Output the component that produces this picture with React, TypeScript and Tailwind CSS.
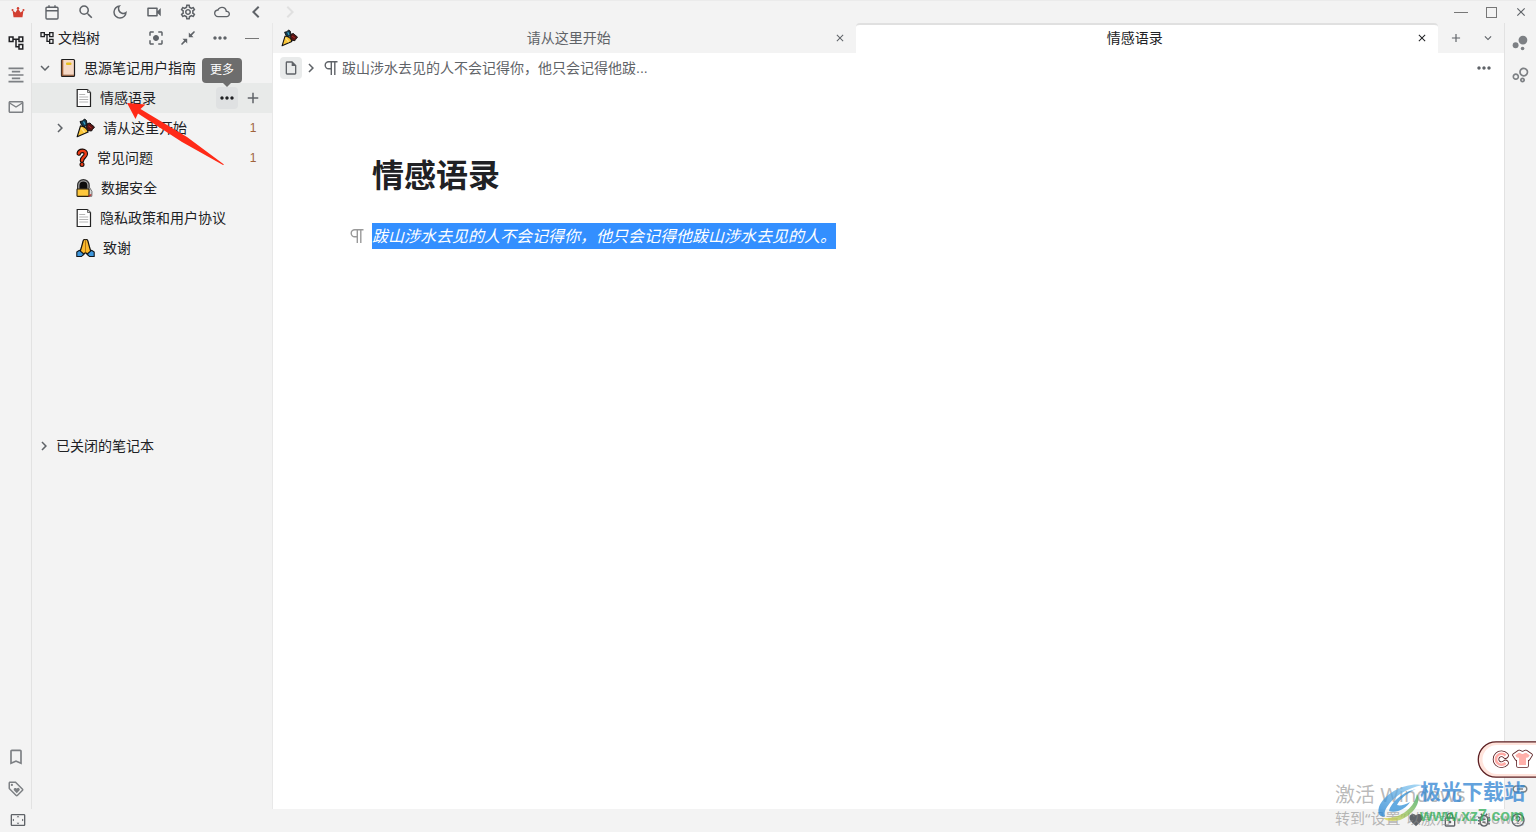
import React, { type ReactElement, type ReactNode } from "react";
import {
  MdAdd,
  MdBubbleChart,
  MdCenterFocusStrong,
  MdChevronLeft,
  MdChevronRight,
  MdClose,
  MdCloudQueue,
  MdExpandMore,
  MdFavorite,
  MdFormatAlignCenter,
  MdHelpOutline,
  MdLink,
  MdMailOutline,
  MdMoreHoriz,
  MdOutlineAccountTree,
  MdOutlineBookmarkBorder,
  MdOutlineBubbleChart,
  MdOutlineBugReport,
  MdOutlineDarkMode,
  MdOutlineInsertDriveFile,
  MdOutlineLock,
  MdOutlineLoyalty,
  MdOutlineSettings,
  MdOutlineSettingsOverscan,
  MdOutlineVideocam,
  MdSearch,
} from "react-icons/md";

type IconButtonProps = {
  label: string;
  className?: string;
  children: ReactNode;
};

const IconButton = ({ label, className = "", children }: IconButtonProps): ReactElement => (
  <button
    type="button"
    aria-label={label}
    className={`flex shrink-0 items-center justify-center ${className}`}
  >
    {children}
  </button>
);

const CrownIcon = () => (
  <svg viewBox="0 0 16 14" className="h-3 w-3.5" fill="#d23f31">
    <circle cx="1.6" cy="4.6" r="1.2" />
    <circle cx="8" cy="2.6" r="1.4" />
    <circle cx="14.4" cy="4.6" r="1.2" />
    <path d="M1.6 5 5 7.6 8 3l3 4.6 3.4-2.600L13.200 13H2.800Z" />
  </svg>
);

const CalendarIcon = () => (
  <svg viewBox="0 0 14 15" className="h-[15px] w-3.5" fill="none" stroke="currentColor" strokeWidth="1.4">
    <rect x="1" y="2.2" width="12" height="11.8" rx="1" />
    <path d="M1 5.800h12M4 .2v2M10 .2v2" />
  </svg>
);

const CollapseIcon = () => (
  <svg viewBox="0 0 16 16" className="size-4" fill="currentColor">
    <path d="M8.800 2.500v4.700h4.700l-1.700-1.700 3.200-3.500-1-1-3.500 3.200ZM7.200 13.500V8.800H2.500l1.700 1.700L1 14l1 1 3.500-3.200Z" />
  </svg>
);

const ParagraphIcon = ({ className = "" }: { className?: string }) => (
  <svg viewBox="0 0 14 16" className={`h-4 w-3.5 ${className}`} fill="none" stroke="currentColor" strokeWidth="1.4">
    <path d="M13.500 1.800H4.700a3.500 3.500 0 0 0 0 7h2.600M7.300 1.800v13.200M10.800 1.800v13.200" />
  </svg>
);

const NotebookIcon = () => (
  <svg viewBox="0 0 16 20" className="h-5 w-4 shrink-0">
    <rect x="1.5" y="1.5" width="13" height="17" rx="1" fill="#f6d9c6" stroke="#1c1c1c" strokeWidth="1.2" />
    <path d="M2.500 2v16" stroke="#a5643c" strokeWidth="1.6" />
    <path d="M2 17.300h12" stroke="#8d5a3b" strokeWidth="1.2" />
    <rect x="6" y="4.5" width="5.500" height="2.500" rx="1" fill="#e8bd1c" />
  </svg>
);

const PageIcon = () => (
  <svg viewBox="0 0 16 20" className="h-5 w-4 shrink-0">
    <path d="M1.200 1.500h10.300l3 3v14H1.200Z" fill="#fff" stroke="#222" strokeWidth="1.2" />
    <path d="M11.500 1.500V4.500h3" fill="#ccc" stroke="#555" strokeWidth=".8" />
    <path d="M3.200 6.500h6M3.200 9h9M3.200 11.500h9M3.200 14h9" stroke="#b5b5b5" />
  </svg>
);

const PartyIcon = ({ className = "h-5 w-[19px]" }: { className?: string }) => (
  <svg viewBox="0 0 19 20" className={`shrink-0 ${className}`}>
    <path d="M4 3.500 6.500 3 8.500 1l2 1.500L11 7 8 9 5.500 7Z" fill="#123a50" stroke="#101010" />
    <path d="m7.500 3.500 1.500 3" fill="none" stroke="#3aa5c9" strokeWidth="1.300" />
    <path d="m10.500 9 1-3.500L14 5l1.500 1.500L18.500 9 16.500 11.500l-1 1.500-4-.5Z" fill="#5a1413" stroke="#101010" />
    <path d="m12.500 8 3 2" fill="none" stroke="#b53028" />
    <path d="M4.500 7.800c3.500.2 7 2.700 7.600 6.200L1.200 18.700Z" fill="#fbc638" stroke="#101010" strokeWidth="1.2" strokeLinejoin="round" />
    <path d="m5.200 10 3.500 4.500" stroke="#fde189" strokeWidth="1.300" />
  </svg>
);

const QuestionIcon = () => (
  <svg viewBox="0 0 13 20" className="h-5 w-[13px] shrink-0" fill="none" strokeLinecap="round">
    <path d="M2.800 5.500C3.500 1.800 10 2 9.800 6c-.2 3-3.800 3-3.800 6.500" stroke="#170b08" strokeWidth="4.6" />
    <circle cx="6" cy="16.500" r="2.500" fill="#170b08" />
    <path d="M2.800 5.500C3.500 1.800 10 2 9.800 6c-.2 3-3.800 3-3.800 6.500" stroke="#ee3c16" strokeWidth="2.4" />
    <circle cx="6" cy="16.500" r="1.400" fill="#ee3c16" />
  </svg>
);

const LockIcon = () => (
  <svg viewBox="0 0 17 20" className="h-5 w-[17px] shrink-0">
    <path d="M1.800 11V7.300a5.600 5.600 0 0 1 11.200 0V11Z" fill="#0c0c0c" stroke="#333" strokeWidth="1.600" />
    <path d="M2.800 11V7.500a4.600 4.600 0 0 1 9.200 0V11" fill="none" stroke="#a9a9a9" strokeWidth="1.200" />
    <path d="m13 8.500 3 5-.2 4.800h-3.500Z" fill="#d7d7d7" stroke="#555" strokeWidth=".8" />
    <rect x="1" y="11" width="12" height="7.400" rx=".6" fill="#ffc83d" stroke="#2a2110" strokeWidth="1.100" />
    <path d="m12.500 18.400 2.800-1.800" stroke="#b32626" strokeWidth="1.200" />
  </svg>
);

const PrayIcon = () => (
  <svg viewBox="0 0 19 20" className="h-5 w-[19px] shrink-0" strokeLinejoin="round">
    <path d="M9.500 1.800c-1.400-.8-2.200 0-2.500 1.700L5.500 9 4 14l2.500 3.500 3-3 3 3L15 14l-1.500-5L12 3.500c-.3-1.700-1.100-2.500-2.500-1.700Z" fill="#fcb92c" stroke="#16120c" strokeWidth="1.200" />
    <path d="M9.500 2.500v12" stroke="#b8780f" />
    <path d="M3.500 12.300 7.800 16l-2.300 2.500H.8V14ZM15.500 12.300 11.200 16l2.300 2.500h4.700V14Z" fill="#3e97dd" stroke="#10161c" strokeWidth="1.100" />
  </svg>
);

type Doc = {
  title: string;
  icon: ReactElement;
  count?: number;
  folded?: boolean;
  current?: boolean;
};

const docs: Doc[] = [
  { title: "情感语录", icon: <PageIcon />, current: true },
  { title: "请从这里开始", icon: <PartyIcon />, count: 1, folded: true },
  { title: "常见问题", icon: <QuestionIcon />, count: 1 },
  { title: "数据安全", icon: <LockIcon /> },
  { title: "隐私政策和用户协议", icon: <PageIcon /> },
  { title: "致谢", icon: <PrayIcon /> },
];

const Toolbar = () => (
  <header className="flex h-[23px] shrink-0 items-center justify-between border-t border-[#ebebeb] pl-px text-[#5f6368]">
    <div className="flex">
      <IconButton label="会员" className="w-[34px]"><CrownIcon /></IconButton>
      <IconButton label="日记" className="w-[34px]"><CalendarIcon /></IconButton>
      <IconButton label="搜索" className="w-[34px]"><MdSearch className="size-[18px]" /></IconButton>
      <IconButton label="外观" className="w-[34px]"><MdOutlineDarkMode className="size-[18px]" /></IconButton>
      <IconButton label="录制" className="w-[34px]"><MdOutlineVideocam className="size-[18px]" /></IconButton>
      <IconButton label="设置" className="w-[34px]"><MdOutlineSettings className="size-[18px]" /></IconButton>
      <IconButton label="同步" className="w-[34px]"><MdCloudQueue className="size-4" /></IconButton>
      <IconButton label="后退" className="w-[34px]"><MdChevronLeft className="size-6" /></IconButton>
      <IconButton label="前进" className="w-[34px] text-[#e0e0e0]"><MdChevronRight className="size-6" /></IconButton>
    </div>
    <div className="flex">
      <IconButton label="最小化" className="w-[30px]">
        <span className="h-px w-3.5 bg-[#777]" />
      </IconButton>
      <IconButton label="最大化" className="w-[30px]">
        <span className="size-[11px] border border-[#777]" />
      </IconButton>
      <IconButton label="关闭" className="w-[30px]"><MdClose className="size-3.5" /></IconButton>
    </div>
  </header>
);

const LeftDock = () => (
  <nav className="flex w-8 shrink-0 flex-col justify-between border-r border-[#e2e2e2] py-1 text-[#7d8084]">
    <div className="flex flex-col">
      <IconButton label="文档树" className="h-8 text-[#202124]"><MdOutlineAccountTree className="size-[18px]" /></IconButton>
      <IconButton label="大纲" className="h-8"><MdFormatAlignCenter className="size-5" /></IconButton>
      <IconButton label="收集箱" className="h-8"><MdMailOutline className="size-[18px]" /></IconButton>
    </div>
    <div className="flex flex-col">
      <IconButton label="书签" className="h-8"><MdOutlineBookmarkBorder className="size-5" /></IconButton>
      <IconButton label="标签" className="h-8"><MdOutlineLoyalty className="size-[18px]" /></IconButton>
    </div>
  </nav>
);

const RightDock = () => (
  <nav className="flex w-8 shrink-0 flex-col justify-between border-l border-[#e2e2e2] py-1 pr-px text-[#7d8084]">
    <div className="flex flex-col">
      <IconButton label="关系图" className="h-8"><MdBubbleChart className="size-[22px]" /></IconButton>
      <IconButton label="全局关系图" className="h-8"><MdOutlineBubbleChart className="size-5" /></IconButton>
    </div>
    <IconButton label="反向链接" className="h-8"><MdLink className="size-[18px]" /></IconButton>
  </nav>
);

const DocRow = ({ doc }: { doc: Doc }) => (
  <li className={`flex h-[30px] items-center pr-2 pl-4 ${doc.current ? "bg-[#e8eae9]" : ""}`}>
    <span className="flex w-7 shrink-0 justify-center pr-1 text-[#5f6368]">
      {doc.folded && (
        <IconButton label="展开"><MdChevronRight className="size-[18px]" /></IconButton>
      )}
    </span>
    {doc.icon}
    <a href="#" className="ml-2 flex-1 truncate">{doc.title}</a>
    {doc.count && <span className="w-[22px] text-center text-xs text-[#a0633c]">{doc.count}</span>}
    {doc.current && (
      <div className="flex gap-1 text-[#5f6368]">
        <div className="relative">
          <IconButton label="更多" className="size-[22px] rounded-sm bg-[#dfe1e2] text-[#202124]">
            <MdMoreHoriz className="size-5" />
          </IconButton>
          <span
            role="tooltip"
            className="absolute -right-1 bottom-full mb-1 rounded bg-[#6d6d6d] px-2 py-1 text-xs leading-[17px] whitespace-nowrap text-white"
          >
            更多
            <span className="absolute top-full right-[11px] border-x-4 border-t-4 border-x-transparent border-t-[#6d6d6d]" />
          </span>
        </div>
        <IconButton label="新建" className="size-[22px]"><MdAdd className="size-[18px]" /></IconButton>
      </div>
    )}
  </li>
);

const FileTree = () => (
  <aside className="relative flex w-60 shrink-0 flex-col text-sm text-[#202124]">
    <div className="flex h-[30px] shrink-0 items-center pr-1 pl-[7px]">
      <MdOutlineAccountTree className="size-4" />
      <h2 className="ml-[3px] flex-1">文档树</h2>
      <div className="flex text-[#5f6368]">
        <IconButton label="定位" className="w-8"><MdCenterFocusStrong className="size-[18px]" /></IconButton>
        <IconButton label="折叠" className="w-8"><CollapseIcon /></IconButton>
        <IconButton label="更多" className="w-8"><MdMoreHoriz className="size-5" /></IconButton>
        <IconButton label="最小化" className="w-8"><span className="h-px w-3.5 bg-[#777]" /></IconButton>
      </div>
    </div>
    <div className="flex h-[30px] shrink-0 items-center">
      <IconButton label="折叠笔记本" className="w-7 pr-0.5 text-[#5f6368]"><MdExpandMore className="size-[18px]" /></IconButton>
      <NotebookIcon />
      <span className="ml-2">思源笔记用户指南</span>
    </div>
    <ul className="min-h-[348px]">
      {docs.map((doc) => (
        <DocRow key={doc.title} doc={doc} />
      ))}
    </ul>
    <button type="button" className="flex h-[30px] shrink-0 items-center">
      <span className="flex w-6 justify-center text-[#5f6368]"><MdChevronRight className="size-[18px]" /></span>
      已关闭的笔记本
    </button>
    <svg viewBox="0 0 98 62" className="pointer-events-none absolute top-20 left-[95px] h-[62px] w-[98px]" fill="#ff2a17">
      <path d="M0 0 18.500 1.500 13.500 6 60 34 97 61.500 96 62 55 39 11 10.500 8.500 16Z" />
    </svg>
  </aside>
);

const Tabs = () => (
  <div className="flex h-[30px] shrink-0 bg-[#f3f3f3] text-sm text-[#5f6368]">
    <div className="flex flex-1 items-center px-2">
      <PartyIcon className="h-[18px] w-[17px]" />
      <a href="#" className="ml-2 flex-1 text-center">请从这里开始</a>
      <IconButton label="关闭页签" className="w-4"><MdClose className="size-3" /></IconButton>
    </div>
    <div className="flex flex-1 items-center rounded-t border-t-2 border-[#e0e0e0] bg-white px-2 pb-0.5 text-[#202124]">
      <a href="#" className="flex-1 pr-2 text-center">情感语录</a>
      <IconButton label="关闭页签" className="w-4"><MdClose className="size-3" /></IconButton>
    </div>
    <div className="flex w-[66px] pl-0.5">
      <IconButton label="新建页签" className="w-8"><MdAdd className="size-3.5" /></IconButton>
      <IconButton label="切换页签" className="w-8"><MdExpandMore className="size-3.5" /></IconButton>
    </div>
  </div>
);

const Editor = () => (
  <main className="flex min-w-0 flex-1 flex-col border-l border-[#e8e8e8] bg-white">
    <Tabs />
    <div className="flex h-[30px] shrink-0 items-center justify-between pr-2.5 pl-[7px] text-sm text-[#5f6368]">
      <div className="flex items-center">
        <IconButton label="文档" className="size-[22px] rounded-sm bg-[#e9ebeb]"><MdOutlineInsertDriveFile className="size-4" /></IconButton>
        <MdChevronRight className="size-[18px]" />
        <ParagraphIcon className="mr-1 ml-1" />
        <span>跋山涉水去见的人不会记得你，他只会记得他跋...</span>
      </div>
      <IconButton label="更多"><MdMoreHoriz className="size-5" /></IconButton>
    </div>
    <article className="flex-1 px-[76px] pt-[68px] text-[#202124]">
      <h1 className="pt-px pl-[23px] text-[32px] leading-[48px] font-bold">情感语录</h1>
      <div className="mt-[23px] flex items-center">
        <ParagraphIcon className="mr-2 ml-px text-[#999]" />
        <p className="bg-[#338fff] pt-0.5 text-base leading-6 text-white italic">
          跋山涉水去见的人不会记得你，他只会记得他跋山涉水去见的人。
        </p>
      </div>
    </article>
  </main>
);

const StatusBar = () => (
  <footer className="flex h-[23px] shrink-0 items-center justify-between px-px pb-px text-[#5f6368]">
    <IconButton label="停靠栏" className="w-[34px]"><MdOutlineSettingsOverscan className="size-4" /></IconButton>
    <div className="flex">
      <IconButton label="赞助" className="w-[34px]"><MdFavorite className="size-4" /></IconButton>
      <IconButton label="锁定" className="w-[34px]"><MdOutlineLock className="size-4" /></IconButton>
      <IconButton label="反馈" className="w-[34px]"><MdOutlineBugReport className="size-[18px]" /></IconButton>
      <IconButton label="帮助" className="w-[34px]"><MdHelpOutline className="size-4" /></IconButton>
    </div>
  </footer>
);

const InputMethodBadge = () => (
  <svg viewBox="0 0 59 37" className="pointer-events-none absolute -right-px bottom-[54px] h-[37px] w-[61px]">
    <path d="M60 .8H19a17.700 17.700 0 0 0 0 35.400h41" fill="#ffe4dc" stroke="#5b1f22" strokeWidth="1.3" />
    <path d="M60 4H20a14.500 14.500 0 0 0 0 29h40" fill="#fff" />
    <path d="M28.500 14.500a5.500 5.500 0 1 0 0 7.500" fill="none" stroke="#5b1f22" strokeWidth="6.5" strokeLinecap="round" />
    <path d="M28.500 14.500a5.500 5.500 0 1 0 0 7.500" fill="none" stroke="#fff" strokeWidth="4.8" strokeLinecap="round" />
    <path d="M28.500 14.500a5.500 5.500 0 1 0 0 7.500" fill="none" stroke="#ffaaa5" strokeWidth="2.6" />
    <path d="m37 14 5-3.500 3.500 1.500L49 10.500l5 3.500-2.500 4-1.500-.5V25h-9v-7.500l-1.500.5Z" fill="#ffb0aa" stroke="#5b1f22" strokeWidth="3.6" strokeLinejoin="round" />
    <path d="m37 14 5-3.500 3.500 1.500L49 10.500l5 3.500-2.500 4-1.500-.5V25h-9v-7.500l-1.500.5Z" fill="#ffb0aa" stroke="#fff" strokeWidth="2" strokeLinejoin="round" />
  </svg>
);

const ActivationNotice = () => (
  <div className="pointer-events-none absolute right-1 bottom-[3px] w-[197px] font-['Noto_Sans','Noto_Sans_CJK_SC',sans-serif] whitespace-nowrap text-[#8b8b8b]/60">
    <p className="text-xl leading-6">激活 Windows</p>
    <p className="text-[15px] leading-[22px]">转到“设置”以激活 Windows。</p>
  </div>
);

const SiteMark = () => (
  <div className="pointer-events-none absolute right-[11px] bottom-2 flex items-end opacity-75">
    <svg viewBox="0 0 46 40" className="h-10 w-[46px]">
      <defs>
        <linearGradient id="swoosh" x1="0" y1="1" x2="1" y2="0">
          <stop offset="0" stopColor="#1d7fd0" />
          <stop offset="1" stopColor="#8fcdf2" />
        </linearGradient>
        <linearGradient id="leaf" x1="0" y1="1" x2="1" y2="0">
          <stop offset="0" stopColor="#e8d94f" />
          <stop offset="1" stopColor="#2fa45c" />
        </linearGradient>
      </defs>
      <path d="M45 1C29-2 7 8 1 23c-2 7 1 11 6 9-1-3 0-6 2-9C16 12 29 4 45 1Z" fill="url(#swoosh)" />
      <path d="M38 5C25 8 13 18 11 27c7 3 18-3 21-9-5 3-10 4-13 3C22 15 29 9 38 5Z" fill="#2f8fd8" />
      <path d="M39 10c5 8-4 21-17 26-8 2-14 1-17-2 13 1 30-6 34-24Z" fill="url(#leaf)" />
    </svg>
    <div className="-ml-1 font-bold">
      <div className="mb-1 text-[21px] leading-6 text-[#2f84d2]">极光下载站</div>
      <div className="text-base leading-4 text-[#2fae58]">www.xz7.com</div>
    </div>
  </div>
);

const App = (): ReactElement => {
  return (
    <div className="relative flex h-screen flex-col overflow-hidden bg-[#f3f3f3] font-['Liberation_Sans','Noto_Sans_CJK_SC',sans-serif]">
      <Toolbar />
      <div className="flex min-h-0 flex-1">
        <LeftDock />
        <FileTree />
        <Editor />
        <RightDock />
      </div>
      <StatusBar />
      <ActivationNotice />
      <SiteMark />
      <InputMethodBadge />
    </div>
  );
};

export default App;
